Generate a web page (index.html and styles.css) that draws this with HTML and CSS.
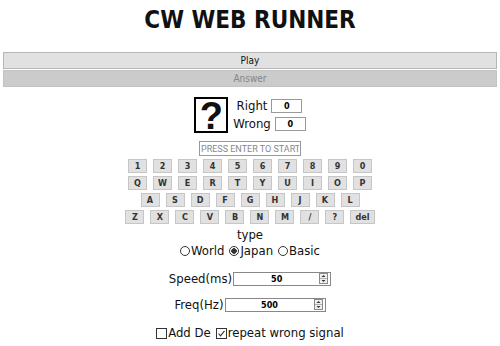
FILE: index.html
```html
<!DOCTYPE html>
<html lang="en">
<head>
    <meta charset="UTF-8">
    <meta name="viewport" content="width=device-width, initial-scale=1.0">
    <title>CW WEB RUNNER</title>
    <link rel="stylesheet" href="styles.css">
</head>
<body>
    <h1 class="title">CW WEB RUNNER</h1>
    <button class="wide-btn play">Play</button>
    <button class="wide-btn answer" disabled>Answer</button>

    <div class="score">
        <div class="mystery">?</div>
        <div class="tally">
            <div class="tally-row"><span>Right</span><input class="count" value="0" readonly></div>
            <div class="tally-row"><span>Wrong</span><input class="count" value="0" readonly></div>
        </div>
    </div>

    <input class="start" placeholder="PRESS ENTER TO START">

    <div class="keyboard">
        <div class="key-row">
            <button class="key">1</button><button class="key">2</button><button class="key">3</button><button class="key">4</button><button class="key">5</button><button class="key">6</button><button class="key">7</button><button class="key">8</button><button class="key">9</button><button class="key">0</button>
        </div>
        <div class="key-row">
            <button class="key">Q</button><button class="key">W</button><button class="key">E</button><button class="key">R</button><button class="key">T</button><button class="key">Y</button><button class="key">U</button><button class="key">I</button><button class="key">O</button><button class="key">P</button>
        </div>
        <div class="key-row">
            <button class="key">A</button><button class="key">S</button><button class="key">D</button><button class="key">F</button><button class="key">G</button><button class="key">H</button><button class="key">J</button><button class="key">K</button><button class="key">L</button>
        </div>
        <div class="key-row">
            <button class="key">Z</button><button class="key">X</button><button class="key">C</button><button class="key">V</button><button class="key">B</button><button class="key">N</button><button class="key">M</button><button class="key">/</button><button class="key">?</button><button class="key del">del</button>
        </div>
    </div>

    <div class="type-label">type</div>
    <div class="radios">
        <label class="opt"><span class="radio"></span>World</label>
        <label class="opt"><span class="radio on"></span>Japan</label>
        <label class="opt"><span class="radio"></span>Basic</label>
    </div>

    <div class="field speed-row">
        <label>Speed(ms)</label>
        <div class="numbox speed">
            <input value="50">
            <span class="spin"><svg width="9" height="11" viewBox="0 0 9 11"><rect x="0.5" y="0.5" width="8" height="10" fill="#f0f0f0" stroke="#8a8a8a"/><line x1="1" y1="5.5" x2="8" y2="5.5" stroke="#b0b0b0"/><path d="M2.5 4 L4.5 2 L6.5 4 Z" fill="#333"/><path d="M2.5 7 L4.5 9 L6.5 7 Z" fill="#333"/></svg></span>
        </div>
    </div>

    <div class="field freq-row">
        <label>Freq(Hz)</label>
        <div class="numbox freq">
            <input value="500">
            <span class="spin"><svg width="9" height="11" viewBox="0 0 9 11"><rect x="0.5" y="0.5" width="8" height="10" fill="#f0f0f0" stroke="#8a8a8a"/><line x1="1" y1="5.5" x2="8" y2="5.5" stroke="#b0b0b0"/><path d="M2.5 4 L4.5 2 L6.5 4 Z" fill="#333"/><path d="M2.5 7 L4.5 9 L6.5 7 Z" fill="#333"/></svg></span>
        </div>
    </div>

    <div class="checks">
        <label class="opt"><span class="check"></span>Add De</label>
        <label class="opt"><span class="check"><svg width="9" height="9" viewBox="0 0 9 9"><path d="M1.5 4.5 L3.5 6.8 L7.5 1.8" fill="none" stroke="#333" stroke-width="1.1"/></svg></span>repeat wrong signal</label>
    </div>
</body>
</html>
```

FILE: styles.css
```css
body {
    margin: 0 3px;
    padding-top: 1px;
    font-family: "DejaVu Sans Condensed", "DejaVu Sans", sans-serif;
    font-stretch: condensed;
    color: #111;
    background: #fff;
    text-align: center;
}
.title {
    font-size: 24px;
    font-weight: bold;
    margin: 5px 0 18px;
    line-height: 28px;
}
.wide-btn {
    display: block;
    width: 100%;
    height: 17px;
    margin: 0 0 1px;
    padding: 0;
    font-family: inherit;
    font-size: 10px;
    border: 1px solid #b5b5b5;
    border-radius: 0;
}
.play {
    background: #e1e1e1;
    color: #111;
}
.answer {
    background: #cbcbcb;
    border-color: #c3c3c3;
    color: #858585;
}
.score {
    display: flex;
    justify-content: center;
    align-items: center;
    gap: 5px;
    margin-top: 10px;
}
.mystery {
    width: 30px;
    height: 32px;
    border: 2px solid #000;
    font-family: "Liberation Sans", sans-serif;
    font-size: 38px;
    font-weight: bold;
    line-height: 34px;
}
.tally {
    display: flex;
    flex-direction: column;
    align-items: center;
    gap: 4px;
}
.tally-row {
    display: flex;
    align-items: center;
    gap: 4px;
    font-size: 13px;
    line-height: 14px;
}
.count {
    width: 31px;
    height: 14px;
    box-sizing: border-box;
    border: 1px solid #999;
    padding: 0;
    font-family: inherit;
    font-size: 9px;
    font-weight: bold;
    text-align: center;
}
.start {
    display: block;
    margin: 8px auto 3px;
    width: 102px;
    height: 15px;
    box-sizing: border-box;
    padding: 0 1px;
    border: 1px solid #999;
    font-family: "Roboto", sans-serif;
    font-size: 9px;
}
.start::placeholder {
    color: #888;
}
.keyboard {
    display: flex;
    flex-direction: column;
    gap: 3px;
}
.key-row {
    display: flex;
    justify-content: center;
    gap: 6px;
}
.key {
    min-width: 19px;
    height: 14px;
    padding: 0 4px;
    border: 1px solid #c6c6c6;
    border-radius: 0;
    background: #e1e1e1;
    color: #333;
    font-family: inherit;
    font-size: 9px;
    font-weight: bold;
    line-height: 12px;
}
.type-label {
    margin-top: 3px;
    font-size: 13px;
    line-height: 16px;
}
.radios, .checks {
    display: flex;
    justify-content: center;
    gap: 5px;
    font-size: 13px;
    line-height: 16px;
}
.opt {
    display: flex;
    align-items: center;
    gap: 1px;
}
.radio {
    width: 8px;
    height: 8px;
    border: 1px solid #333;
    border-radius: 50%;
}
.radio.on {
    background: radial-gradient(circle, #333 0 2.5px, #fff 3px);
}
.check {
    width: 9px;
    height: 9px;
    border: 1px solid #333;
    display: flex;
}
.field {
    display: flex;
    justify-content: center;
    align-items: center;
    gap: 1px;
    font-size: 13px;
}
.speed-row {
    margin-top: 12px;
}
.freq-row {
    margin-top: 11px;
}
.numbox {
    display: flex;
    align-items: center;
    height: 14px;
    box-sizing: border-box;
    border: 1px solid #888;
    padding-right: 2px;
}
.numbox.speed {
    width: 98px;
}
.numbox.freq {
    width: 101px;
}
.numbox input {
    flex: 1;
    min-width: 0;
    border: none;
    padding: 0;
    height: 11px;
    font-family: inherit;
    font-size: 9px;
    font-weight: bold;
    text-align: center;
}
.spin {
    display: flex;
}
.checks {
    margin-top: 13px;
}
```
